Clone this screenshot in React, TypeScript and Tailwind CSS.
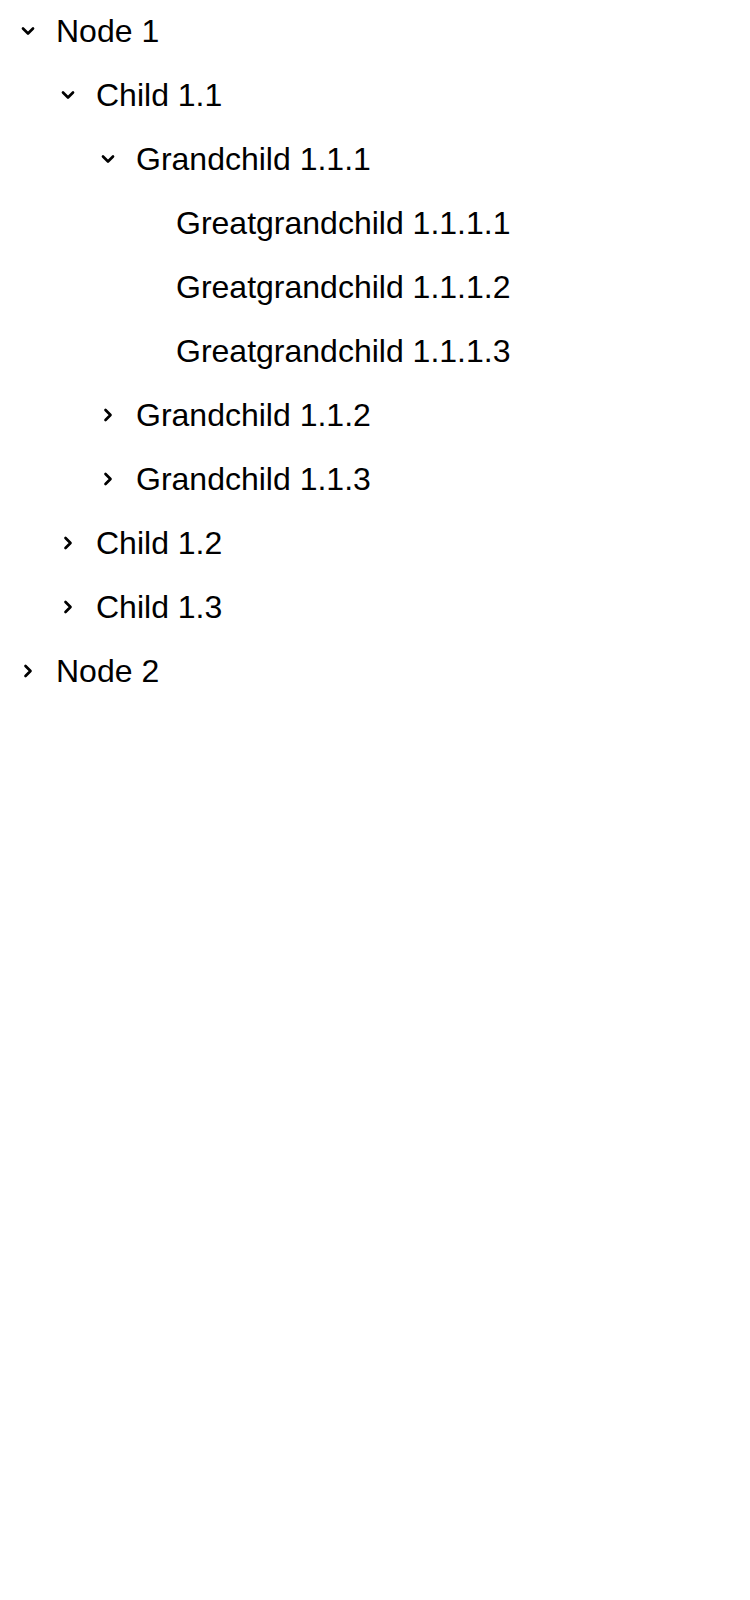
import { ChevronDown, ChevronRight } from "lucide-react";

type TreeNode = {
  label: string;
  open?: boolean;
  children?: TreeNode[];
};

// Collapsed nodes still carry a placeholder child so they render a chevron.
const tree: TreeNode[] = [
  {
    label: "Node 1",
    open: true,
    children: [
      {
        label: "Child 1.1",
        open: true,
        children: [
          {
            label: "Grandchild 1.1.1",
            open: true,
            children: [
              { label: "Greatgrandchild 1.1.1.1" },
              { label: "Greatgrandchild 1.1.1.2" },
              { label: "Greatgrandchild 1.1.1.3" },
            ],
          },
          { label: "Grandchild 1.1.2", children: [{ label: "…" }] },
          { label: "Grandchild 1.1.3", children: [{ label: "…" }] },
        ],
      },
      { label: "Child 1.2", children: [{ label: "…" }] },
      { label: "Child 1.3", children: [{ label: "…" }] },
    ],
  },
  { label: "Node 2", children: [{ label: "…" }] },
];

function TreeRow({ node, depth }: { node: TreeNode; depth: number }) {
  const hasChildren = !!node.children?.length;
  return (
    <li>
      <div className="flex h-16 items-center gap-[18px] pr-4 pb-0.5" style={{ paddingLeft: 18 + depth * 40 }}>
        <span className="flex h-5 w-5 shrink-0 items-center justify-center">
          {hasChildren &&
            (node.open ? (
              <ChevronDown size={20} strokeWidth={3.2} />
            ) : (
              <ChevronRight size={20} strokeWidth={3.2} />
            ))}
        </span>
        <span className="text-[32px] leading-none">{node.label}</span>
      </div>
      {hasChildren && node.open && (
        <ul>
          {node.children!.map((child) => (
            <TreeRow key={child.label} node={child} depth={depth + 1} />
          ))}
        </ul>
      )}
    </li>
  );
}

export default function App() {
  return (
    <div className="min-h-[1600px] bg-white text-black" style={{ fontFamily: '"Liberation Sans", Arial, sans-serif' }}>
      <ul>
        {tree.map((node) => (
          <TreeRow key={node.label} node={node} depth={0} />
        ))}
      </ul>
    </div>
  );
}
